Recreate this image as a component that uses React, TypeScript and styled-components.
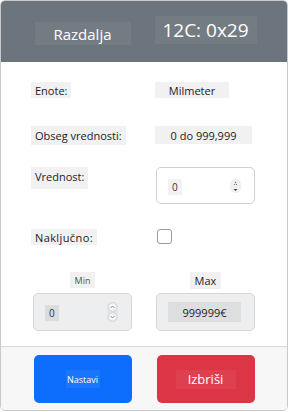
import React from 'react';
import styled, { createGlobalStyle } from 'styled-components';

const GlobalStyle = createGlobalStyle`
    html, body {
        margin: 0;
        padding: 0;
        background: #ffffff;
    }
    body {
        font-family: "Open Sans", "Noto Sans", sans-serif;
    }
`;

const Card = styled.div`
    box-sizing: border-box;
    width: 288px;
    height: 411px;
    border: 1px solid #c9c9c9;
    border-radius: 5px;
    overflow: hidden;
    display: flex;
    flex-direction: column;
    background: #fff;
`;

const Header = styled.div`
    height: 61px;
    background: #6c757d;
    display: grid;
    grid-template-columns: 98px 98px;
    column-gap: 25px;
    justify-content: center;
    align-items: center;
    padding-bottom: 4px;
    box-sizing: border-box;
`;

const HeaderBox = styled.div<{ $size: number; $w: number; $h: number; $shift?: number }>`
    justify-self: center;
    width: ${(p) => p.$w}px;
    height: ${(p) => p.$h}px;
    margin-top: ${(p) => p.$shift ?? 0}px;
    background: rgba(255, 255, 255, 0.05);
    color: #fff;
    font-size: ${(p) => p.$size}px;
    display: flex;
    align-items: center;
    justify-content: center;
`;

const Body = styled.div`
    flex: 1;
    padding-top: 20px;
    display: flex;
    flex-direction: column;
`;

const Row = styled.div<{ $mt?: number }>`
    display: grid;
    grid-template-columns: 99px 99px;
    column-gap: 24px;
    justify-content: center;
    align-items: start;
    margin-top: ${(p) => p.$mt ?? 0}px;
`;

const Label = styled.div<{ $h: number; $top?: boolean; $ls?: number }>`
    justify-self: start;
    margin-left: -2px;
    height: ${(p) => p.$h}px;
    padding: 0 4px;
    background: #f1f1f1;
    color: #222;
    font-size: 11px;
    letter-spacing: ${(p) => p.$ls ?? 0}px;
    display: flex;
    align-items: ${(p) => (p.$top ? 'flex-start' : 'center')};
    padding-top: ${(p) => (p.$top ? 2 : 0)}px;
    box-sizing: border-box;
    white-space: nowrap;
`;

const Value = styled.div<{ $w: number; $h: number }>`
    margin-left: -1px;
    width: ${(p) => p.$w}px;
    height: ${(p) => p.$h}px;
    background: #f1f1f1;
    color: #222;
    font-size: 11px;
    display: flex;
    align-items: center;
    justify-content: center;
`;

const InputBox = styled.div<{ $disabled?: boolean }>`
    box-sizing: border-box;
    height: ${(p) => (p.$disabled ? 38 : 37)}px;
    border: 1px solid ${(p) => (p.$disabled ? '#d4d6d8' : '#cfcfcf')};
    border-radius: 5px;
    background: ${(p) => (p.$disabled ? '#eceef0' : '#fff')};
    display: flex;
    align-items: center;
    padding: 0 13px 0 11px;
    justify-content: space-between;
`;

const Digit = styled.span<{ $dark?: boolean }>`
    background: ${(p) => (p.$dark ? '#dadcde' : '#f2f2f2')};
    color: #333;
    font-size: 10px;
    padding: 1px 4px;
    margin-top: 2px;
`;

const Spinner = styled.div<{ $round?: boolean }>`
    width: 11px;
    height: ${(p) => (p.$round ? 20 : 14)}px;
    border-radius: 5px;
    background: ${(p) => (p.$round ? '#e4e6e8' : '#f0f0f0')};
    display: flex;
    align-items: center;
    justify-content: center;
`;

const Checkbox = styled.div`
    width: 15px;
    height: 15px;
    box-sizing: border-box;
    border: 1px solid #9a9a9a;
    border-radius: 3px;
    margin-left: 1px;
    background: #fff;
`;

const SmallTag = styled.div<{ $size: number; $color: string; $h: number }>`
    justify-self: center;
    height: ${(p) => p.$h}px;
    padding: 0 5px;
    background: #f1f1f1;
    color: ${(p) => p.$color};
    font-size: ${(p) => p.$size}px;
    display: flex;
    align-items: center;
`;

const MaxValue = styled.div`
    width: 74px;
    height: 20px;
    background: #dcdedf;
    color: #222;
    font-size: 11px;
    display: flex;
    align-items: center;
    justify-content: center;
`;

const Footer = styled.div`
    height: 64px;
    border-top: 1px solid #d8d8d8;
    background: #f7f7f7;
    display: grid;
    grid-template-columns: 98px 98px;
    column-gap: 25px;
    justify-content: center;
    padding-top: 8px;
    box-sizing: border-box;
`;

const Button = styled.button<{ $bg: string }>`
    height: 48px;
    border: none;
    border-radius: 5px;
    background: ${(p) => p.$bg};
    display: flex;
    align-items: center;
    justify-content: center;
    padding: 0;
    font-family: inherit;
`;

const ButtonText = styled.span<{ $size: number; $w: number; $h: number }>`
    width: ${(p) => p.$w}px;
    height: ${(p) => p.$h}px;
    background: rgba(255, 255, 255, 0.06);
    color: #fff;
    font-size: ${(p) => p.$size}px;
    display: flex;
    align-items: center;
    justify-content: center;
`;

function TinySpin() {
    return (
        <svg width="7" height="12" viewBox="0 0 7 12">
            <circle cx="3.5" cy="2.5" r="0.7" fill="#666" />
            <circle cx="2.5" cy="4.5" r="0.6" fill="#666" />
            <circle cx="4.5" cy="4.5" r="0.6" fill="#666" />
            <path d="M1.5 9 L5.5 9 L3.5 11 Z" fill="#444" />
        </svg>
    );
}

function RoundSpin() {
    return (
        <svg width="11" height="20" viewBox="0 0 11 20">
            <circle cx="5.5" cy="5" r="4.3" fill="#f4f5f6" stroke="#c8cacc" strokeWidth="0.7" />
            <circle cx="5.5" cy="15" r="4.3" fill="#f4f5f6" stroke="#c8cacc" strokeWidth="0.7" />
            <path d="M3.5 6 L5.5 4 L7.5 6" fill="none" stroke="#888" strokeWidth="0.9" />
            <path d="M3.5 14 L5.5 16 L7.5 14" fill="none" stroke="#888" strokeWidth="0.9" />
        </svg>
    );
}

export default function App() {
    return (
        <>
            <GlobalStyle />
            <Card>
                <Header>
                    <HeaderBox $size={15} $w={96} $h={23} $shift={8}>Razdalja</HeaderBox>
                    <HeaderBox $size={19} $w={102} $h={28}>12C: 0x29</HeaderBox>
                </Header>
                <Body>
                    <Row>
                        <Label $h={16}>Enote:</Label>
                        <Value $w={74} $h={16}>Milmeter</Value>
                    </Row>
                    <Row $mt={28}>
                        <Label $h={19}>Obseg vrednosti:</Label>
                        <Value $w={97} $h={18}>0 do 999,999</Value>
                    </Row>
                    <Row $mt={22}>
                        <Label $h={22} $top>Vrednost:</Label>
                        <InputBox>
                            <Digit>0</Digit>
                            <Spinner>
                                <TinySpin />
                            </Spinner>
                        </InputBox>
                    </Row>
                    <Row $mt={25}>
                        <Label $h={16} $ls={0.4}>Naključno:</Label>
                        <Checkbox />
                    </Row>
                    <Row $mt={27}>
                        <SmallTag $size={9} $color="#555" $h={16}>Min</SmallTag>
                        <SmallTag $size={11} $color="#222" $h={17}>Max</SmallTag>
                    </Row>
                    <Row $mt={4}>
                        <InputBox $disabled>
                            <Digit $dark>0</Digit>
                            <Spinner $round>
                                <RoundSpin />
                            </Spinner>
                        </InputBox>
                        <InputBox $disabled>
                            <MaxValue>999999€</MaxValue>
                        </InputBox>
                    </Row>
                </Body>
                <Footer>
                    <Button $bg="#0d6efd">
                        <ButtonText $size={9} $w={34} $h={18}>Nastavi</ButtonText>
                    </Button>
                    <Button $bg="#dc3545">
                        <ButtonText $size={13} $w={60} $h={19}>Izbriši</ButtonText>
                    </Button>
                </Footer>
            </Card>
        </>
    );
}
